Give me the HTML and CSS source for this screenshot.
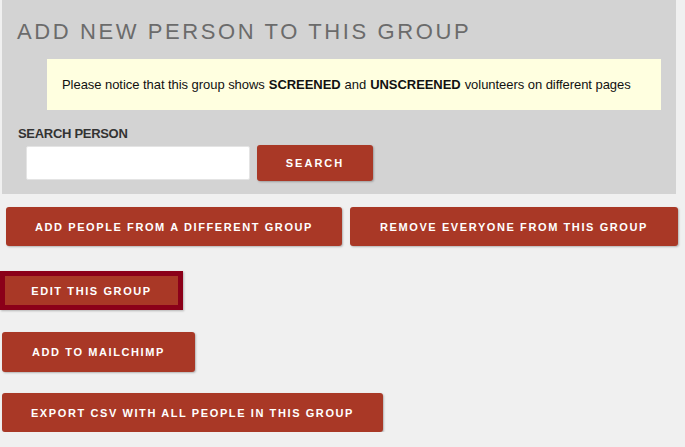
FILE: index.html
```html
<!DOCTYPE html>
<html lang="en">
<head>
    <meta charset="UTF-8">
    <title>Group</title>
    <link rel="stylesheet" href="styles.css">
</head>
<body>
    <div class="add-panel">
        <h1>Add new person to this group</h1>
        <div class="notice">
            Please notice that this group shows <b>SCREENED</b> and <b>UNSCREENED</b> volunteers on different pages
        </div>
        <label for="search" class="search-label">Search person</label>
        <div class="search-row">
            <input type="text" id="search" class="search-input">
            <button class="btn btn-search">Search</button>
        </div>
    </div>

    <div class="btn-row">
        <button class="btn btn-wide">Add people from a different group</button>
        <button class="btn btn-wide">Remove everyone from this group</button>
    </div>

    <div class="actions">
        <button class="btn btn-edit">Edit this group</button>
        <button class="btn btn-mailchimp">Add to Mailchimp</button>
        <button class="btn btn-export">Export CSV with all people in this group</button>
    </div>
</body>
</html>
```

FILE: styles.css
```css
body {
    font-family: "Liberation Sans", Arial, sans-serif;
    background-color: #f0f0f0;
    margin: 0;
    padding: 0;
}

.add-panel {
    background-color: #d3d3d3;
    margin: 0 9px 0 2px;
    padding: 19px 15px 14px;
    height: 161px;
}

.add-panel h1 {
    margin: 0;
    font-size: 22px;
    font-weight: normal;
    letter-spacing: 2.6px;
    text-transform: uppercase;
    color: #6b6b6b;
}

.notice {
    background-color: #ffffe0;
    margin: 14px 0 0 30px;
    width: 614px;
    height: 51px;
    box-sizing: border-box;
    padding: 0 0 0 15px;
    display: flex;
    align-items: center;
    font-size: 13px;
    letter-spacing: -0.05px;
    color: #111;
    white-space: nowrap;
}

.notice b {
    margin: 0 4px;
}

.search-label {
    display: block;
    margin: 16px 0 0 1px;
    font-size: 13px;
    font-weight: bold;
    letter-spacing: -0.3px;
    text-transform: uppercase;
    color: #333;
}

.search-row {
    display: flex;
    gap: 7px;
    margin: 4px 0 0 9px;
    align-items: center;
}

.search-input {
    width: 224px;
    height: 34px;
    box-sizing: border-box;
    border: 1px solid #e4e4e4;
    border-radius: 2px;
    background: white;
}

.btn {
    background-color: #a93826;
    color: white;
    border: none;
    border-radius: 3px;
    font-family: "Liberation Sans", Arial, sans-serif;
    font-size: 11px;
    font-weight: bold;
    letter-spacing: 1.6px;
    text-transform: uppercase;
    box-shadow: 1px 1px 2px rgba(0, 0, 0, 0.25);
    cursor: pointer;
}

.btn-search {
    width: 116px;
    height: 36px;
    letter-spacing: 2px;
}

.btn-row {
    display: flex;
    gap: 8px;
    margin: 13px 7px 0 6px;
}

.btn-wide {
    height: 39px;
}

.btn-row .btn:first-child {
    width: 336px;
}

.btn-row .btn:last-child {
    width: 328px;
}

.actions {
    display: flex;
    flex-direction: column;
    align-items: flex-start;
    margin-top: 25px;
}

.btn-edit {
    width: 183px;
    height: 39px;
    border: 5px solid #8b0019;
    border-radius: 0;
}

.btn-mailchimp {
    margin: 22px 0 0 2px;
    width: 193px;
    height: 40px;
}

.btn-export {
    margin: 21px 0 0 2px;
    width: 381px;
    height: 39px;
}
```
